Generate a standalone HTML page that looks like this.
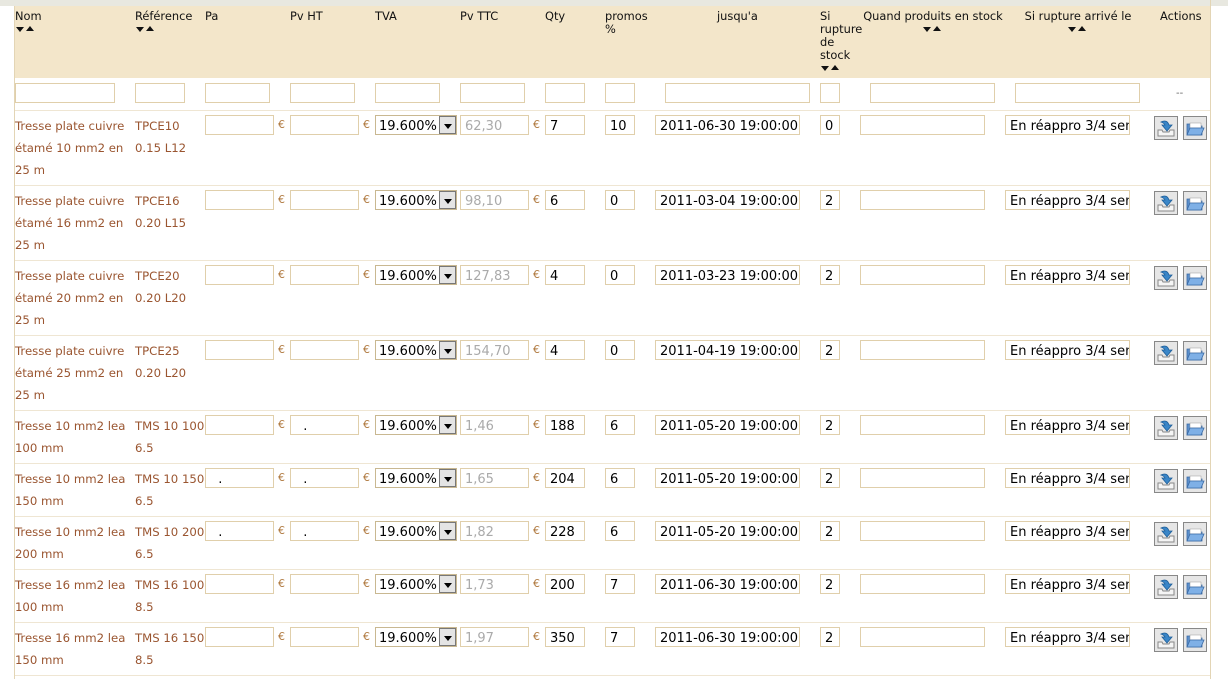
<!DOCTYPE html>
<html><head><meta charset="utf-8"><style>
*{margin:0;padding:0;box-sizing:border-box}
body{width:1228px;height:679px;background:#fff;font-family:"DejaVu Sans","Liberation Sans",sans-serif;font-size:11px;position:relative;overflow:hidden}
.a{position:absolute}
.top{left:0;top:0;width:1228px;height:6px;background:#e8e8e0}
.hd{left:14px;top:6px;width:1197px;height:72px;background:#f3e6ca}
.lb{left:14px;top:6px;width:1px;height:673px;background:#e3d5b5}
.rb{left:1210px;top:0;width:1px;height:679px;background:#e3d5b5}
.h{position:absolute;top:10px;color:#111;line-height:13px;font-size:11.4px;white-space:nowrap}
.s{display:inline-block;height:13px;width:22px;position:relative}
.s:before{content:"";position:absolute;left:1px;top:4px;border-left:4px solid transparent;border-right:4px solid transparent;border-top:5px solid #111}
.s:after{content:"";position:absolute;left:11px;top:3px;border-left:4px solid transparent;border-right:4px solid transparent;border-bottom:5px solid #111}
.in{position:absolute;height:20px;border:1px solid #e0cfab;background:#fff;font-size:13px;line-height:19px;padding-top:1px;padding-left:4px;color:#000;white-space:nowrap;overflow:hidden}
.g{color:#aaa}
.sep{position:absolute;left:15px;width:1195px;height:1px;background:#efe6d3}
.tx{position:absolute;color:#9a5530;line-height:22px;font-size:11.7px;white-space:nowrap}
.eu{position:absolute;color:#b07a40;font-size:11px;line-height:20px}
.sel{position:absolute;width:82px;height:20px;border:1px solid #c9b891;background:#fff;font-size:13px;line-height:19px;padding-left:3px;padding-top:1px}
.sel i{position:absolute;right:0;top:0;width:17px;height:18px;background:#e4e4e4;border:1px solid #777}
.sel i:after{content:"";position:absolute;left:4px;top:7px;border-left:4px solid transparent;border-right:4px solid transparent;border-top:5px solid #000}
.ic{position:absolute;width:24px;height:24px}
</style></head><body>
<div class="a top"></div>
<div class="a hd"></div>
<div class="a lb"></div>
<div class="a rb"></div>

<div class="h" style="left:15px">Nom<br><span class="s"></span></div>
<div class="h" style="left:135px">Référence<br><span class="s"></span></div>
<div class="h" style="left:205px">Pa</div>
<div class="h" style="left:290px">Pv HT</div>
<div class="h" style="left:375px">TVA</div>
<div class="h" style="left:460px">Pv TTC</div>
<div class="h" style="left:545px">Qty</div>
<div class="h" style="left:605px">promos<br>%</div>
<div class="h" style="left:717px">jusqu'a</div>
<div class="h" style="left:820px">Si<br>rupture<br>de<br>stock<br><span class="s"></span></div>
<div class="h" style="left:863px;text-align:center;width:140px">Quand produits en stock<br><span class="s"></span></div>
<div class="h" style="left:1020px;text-align:center;width:116px">Si rupture arrivé le<br><span class="s"></span></div>
<div class="h" style="left:1160px">Actions</div>

<!-- filter row -->
<div class="in" style="left:15px;top:83px;width:100px"></div>
<div class="in" style="left:135px;top:83px;width:50px"></div>
<div class="in" style="left:205px;top:83px;width:65px"></div>
<div class="in" style="left:290px;top:83px;width:65px"></div>
<div class="in" style="left:375px;top:83px;width:65px"></div>
<div class="in" style="left:460px;top:83px;width:65px"></div>
<div class="in" style="left:545px;top:83px;width:40px"></div>
<div class="in" style="left:605px;top:83px;width:30px"></div>
<div class="in" style="left:665px;top:83px;width:145px"></div>
<div class="in" style="left:820px;top:83px;width:20px"></div>
<div class="in" style="left:870px;top:83px;width:125px"></div>
<div class="in" style="left:1015px;top:83px;width:125px"></div>
<div class="a" style="left:1176px;top:88px;color:#666;font-size:10px">--</div>

<svg width="0" height="0" style="position:absolute"><defs>
<g id="i1"><rect x="0.5" y="0.5" width="23" height="23" fill="#e6e6e6" stroke="#888"/><path d="M4 14 L4 20 L20 20 L20 14 L16 14 L15 16 L9 16 L8 14 Z" fill="#f5f5f5" stroke="#888"/><path d="M7 6 Q13 3 15 9 L18 9 L13 15 L8 9 L11 9 Q10 7 7 6 Z" fill="#3a86c8" stroke="#1f5f99" stroke-width="0.8"/></g>
<g id="i2"><rect x="0.5" y="0.5" width="23" height="23" fill="#e6e6e6" stroke="#888"/><path d="M4 8 L9 8 L10 10 L19 10 L19 19 L4 19 Z" fill="#5b8fcc" stroke="#3a6aa5" stroke-width="0.8"/><rect x="7" y="7" width="11" height="5" fill="#fff" stroke="#999" stroke-width="0.5"/><path d="M4 19 L7 12 L21 12 L18 19 Z" fill="#7fb0e6" stroke="#3a6aa5" stroke-width="0.8"/></g>
</defs></svg>

<!-- rows -->
<div class="sep" style="top:110px"></div>
<div class="tx" style="left:15px;top:115px">Tresse plate cuivre<br>étamé 10 mm2 en<br>25 m</div>
<div class="tx" style="left:135px;top:115px">TPCE10<br>0.15 L12</div>
<div class="in" style="left:205px;top:115px;width:69px"></div><div class="eu" style="left:278px;top:115px">€</div>
<div class="in" style="left:290px;top:115px;width:69px"></div><div class="eu" style="left:363px;top:115px">€</div>
<div class="sel" style="left:375px;top:115px">19.600%<i></i></div>
<div class="in g" style="left:460px;top:115px;width:69px">62,30</div><div class="eu" style="left:533px;top:115px">€</div>
<div class="in" style="left:545px;top:115px;width:40px">7</div>
<div class="in" style="left:605px;top:115px;width:30px">10</div>
<div class="in" style="left:655px;top:115px;width:145px">2011-06-30 19:00:00</div>
<div class="in" style="left:820px;top:115px;width:20px">0</div>
<div class="in" style="left:860px;top:115px;width:125px"></div>
<div class="in" style="left:1005px;top:115px;width:125px">En réappro 3/4 semaines</div>
<svg class="ic" style="left:1154px;top:116px"><use href="#i1"/></svg><svg class="ic" style="left:1183px;top:116px"><use href="#i2"/></svg>

<div class="sep" style="top:185px"></div>
<div class="tx" style="left:15px;top:190px">Tresse plate cuivre<br>étamé 16 mm2 en<br>25 m</div>
<div class="tx" style="left:135px;top:190px">TPCE16<br>0.20 L15</div>
<div class="in" style="left:205px;top:190px;width:69px"></div><div class="eu" style="left:278px;top:190px">€</div>
<div class="in" style="left:290px;top:190px;width:69px"></div><div class="eu" style="left:363px;top:190px">€</div>
<div class="sel" style="left:375px;top:190px">19.600%<i></i></div>
<div class="in g" style="left:460px;top:190px;width:69px">98,10</div><div class="eu" style="left:533px;top:190px">€</div>
<div class="in" style="left:545px;top:190px;width:40px">6</div>
<div class="in" style="left:605px;top:190px;width:30px">0</div>
<div class="in" style="left:655px;top:190px;width:145px">2011-03-04 19:00:00</div>
<div class="in" style="left:820px;top:190px;width:20px">2</div>
<div class="in" style="left:860px;top:190px;width:125px"></div>
<div class="in" style="left:1005px;top:190px;width:125px">En réappro 3/4 semaines</div>
<svg class="ic" style="left:1154px;top:191px"><use href="#i1"/></svg><svg class="ic" style="left:1183px;top:191px"><use href="#i2"/></svg>

<div class="sep" style="top:260px"></div>
<div class="tx" style="left:15px;top:265px">Tresse plate cuivre<br>étamé 20 mm2 en<br>25 m</div>
<div class="tx" style="left:135px;top:265px">TPCE20<br>0.20 L20</div>
<div class="in" style="left:205px;top:265px;width:69px"></div><div class="eu" style="left:278px;top:265px">€</div>
<div class="in" style="left:290px;top:265px;width:69px"></div><div class="eu" style="left:363px;top:265px">€</div>
<div class="sel" style="left:375px;top:265px">19.600%<i></i></div>
<div class="in g" style="left:460px;top:265px;width:69px">127,83</div><div class="eu" style="left:533px;top:265px">€</div>
<div class="in" style="left:545px;top:265px;width:40px">4</div>
<div class="in" style="left:605px;top:265px;width:30px">0</div>
<div class="in" style="left:655px;top:265px;width:145px">2011-03-23 19:00:00</div>
<div class="in" style="left:820px;top:265px;width:20px">2</div>
<div class="in" style="left:860px;top:265px;width:125px"></div>
<div class="in" style="left:1005px;top:265px;width:125px">En réappro 3/4 semaines</div>
<svg class="ic" style="left:1154px;top:266px"><use href="#i1"/></svg><svg class="ic" style="left:1183px;top:266px"><use href="#i2"/></svg>

<div class="sep" style="top:335px"></div>
<div class="tx" style="left:15px;top:340px">Tresse plate cuivre<br>étamé 25 mm2 en<br>25 m</div>
<div class="tx" style="left:135px;top:340px">TPCE25<br>0.20 L20</div>
<div class="in" style="left:205px;top:340px;width:69px"></div><div class="eu" style="left:278px;top:340px">€</div>
<div class="in" style="left:290px;top:340px;width:69px"></div><div class="eu" style="left:363px;top:340px">€</div>
<div class="sel" style="left:375px;top:340px">19.600%<i></i></div>
<div class="in g" style="left:460px;top:340px;width:69px">154,70</div><div class="eu" style="left:533px;top:340px">€</div>
<div class="in" style="left:545px;top:340px;width:40px">4</div>
<div class="in" style="left:605px;top:340px;width:30px">0</div>
<div class="in" style="left:655px;top:340px;width:145px">2011-04-19 19:00:00</div>
<div class="in" style="left:820px;top:340px;width:20px">2</div>
<div class="in" style="left:860px;top:340px;width:125px"></div>
<div class="in" style="left:1005px;top:340px;width:125px">En réappro 3/4 semaines</div>
<svg class="ic" style="left:1154px;top:341px"><use href="#i1"/></svg><svg class="ic" style="left:1183px;top:341px"><use href="#i2"/></svg>

<div class="sep" style="top:410px"></div>
<div class="tx" style="left:15px;top:415px">Tresse 10 mm2 lea<br>100 mm</div>
<div class="tx" style="left:135px;top:415px">TMS 10 100<br>6.5</div>
<div class="in" style="left:205px;top:415px;width:69px"></div><div class="eu" style="left:278px;top:415px">€</div>
<div class="in" style="left:290px;top:415px;width:69px">&nbsp;&nbsp;.</div><div class="eu" style="left:363px;top:415px">€</div>
<div class="sel" style="left:375px;top:415px">19.600%<i></i></div>
<div class="in g" style="left:460px;top:415px;width:69px">1,46</div><div class="eu" style="left:533px;top:415px">€</div>
<div class="in" style="left:545px;top:415px;width:40px">188</div>
<div class="in" style="left:605px;top:415px;width:30px">6</div>
<div class="in" style="left:655px;top:415px;width:145px">2011-05-20 19:00:00</div>
<div class="in" style="left:820px;top:415px;width:20px">2</div>
<div class="in" style="left:860px;top:415px;width:125px"></div>
<div class="in" style="left:1005px;top:415px;width:125px">En réappro 3/4 semaines</div>
<svg class="ic" style="left:1154px;top:416px"><use href="#i1"/></svg><svg class="ic" style="left:1183px;top:416px"><use href="#i2"/></svg>

<div class="sep" style="top:463px"></div>
<div class="tx" style="left:15px;top:468px">Tresse 10 mm2 lea<br>150 mm</div>
<div class="tx" style="left:135px;top:468px">TMS 10 150<br>6.5</div>
<div class="in" style="left:205px;top:468px;width:69px">&nbsp;&nbsp;.</div><div class="eu" style="left:278px;top:468px">€</div>
<div class="in" style="left:290px;top:468px;width:69px">&nbsp;&nbsp;.</div><div class="eu" style="left:363px;top:468px">€</div>
<div class="sel" style="left:375px;top:468px">19.600%<i></i></div>
<div class="in g" style="left:460px;top:468px;width:69px">1,65</div><div class="eu" style="left:533px;top:468px">€</div>
<div class="in" style="left:545px;top:468px;width:40px">204</div>
<div class="in" style="left:605px;top:468px;width:30px">6</div>
<div class="in" style="left:655px;top:468px;width:145px">2011-05-20 19:00:00</div>
<div class="in" style="left:820px;top:468px;width:20px">2</div>
<div class="in" style="left:860px;top:468px;width:125px"></div>
<div class="in" style="left:1005px;top:468px;width:125px">En réappro 3/4 semaines</div>
<svg class="ic" style="left:1154px;top:469px"><use href="#i1"/></svg><svg class="ic" style="left:1183px;top:469px"><use href="#i2"/></svg>

<div class="sep" style="top:516px"></div>
<div class="tx" style="left:15px;top:521px">Tresse 10 mm2 lea<br>200 mm</div>
<div class="tx" style="left:135px;top:521px">TMS 10 200<br>6.5</div>
<div class="in" style="left:205px;top:521px;width:69px">&nbsp;&nbsp;.</div><div class="eu" style="left:278px;top:521px">€</div>
<div class="in" style="left:290px;top:521px;width:69px">&nbsp;&nbsp;.</div><div class="eu" style="left:363px;top:521px">€</div>
<div class="sel" style="left:375px;top:521px">19.600%<i></i></div>
<div class="in g" style="left:460px;top:521px;width:69px">1,82</div><div class="eu" style="left:533px;top:521px">€</div>
<div class="in" style="left:545px;top:521px;width:40px">228</div>
<div class="in" style="left:605px;top:521px;width:30px">6</div>
<div class="in" style="left:655px;top:521px;width:145px">2011-05-20 19:00:00</div>
<div class="in" style="left:820px;top:521px;width:20px">2</div>
<div class="in" style="left:860px;top:521px;width:125px"></div>
<div class="in" style="left:1005px;top:521px;width:125px">En réappro 3/4 semaines</div>
<svg class="ic" style="left:1154px;top:522px"><use href="#i1"/></svg><svg class="ic" style="left:1183px;top:522px"><use href="#i2"/></svg>

<div class="sep" style="top:569px"></div>
<div class="tx" style="left:15px;top:574px">Tresse 16 mm2 lea<br>100 mm</div>
<div class="tx" style="left:135px;top:574px">TMS 16 100<br>8.5</div>
<div class="in" style="left:205px;top:574px;width:69px"></div><div class="eu" style="left:278px;top:574px">€</div>
<div class="in" style="left:290px;top:574px;width:69px"></div><div class="eu" style="left:363px;top:574px">€</div>
<div class="sel" style="left:375px;top:574px">19.600%<i></i></div>
<div class="in g" style="left:460px;top:574px;width:69px">1,73</div><div class="eu" style="left:533px;top:574px">€</div>
<div class="in" style="left:545px;top:574px;width:40px">200</div>
<div class="in" style="left:605px;top:574px;width:30px">7</div>
<div class="in" style="left:655px;top:574px;width:145px">2011-06-30 19:00:00</div>
<div class="in" style="left:820px;top:574px;width:20px">2</div>
<div class="in" style="left:860px;top:574px;width:125px"></div>
<div class="in" style="left:1005px;top:574px;width:125px">En réappro 3/4 semaines</div>
<svg class="ic" style="left:1154px;top:575px"><use href="#i1"/></svg><svg class="ic" style="left:1183px;top:575px"><use href="#i2"/></svg>

<div class="sep" style="top:622px"></div>
<div class="tx" style="left:15px;top:627px">Tresse 16 mm2 lea<br>150 mm</div>
<div class="tx" style="left:135px;top:627px">TMS 16 150<br>8.5</div>
<div class="in" style="left:205px;top:627px;width:69px"></div><div class="eu" style="left:278px;top:627px">€</div>
<div class="in" style="left:290px;top:627px;width:69px"></div><div class="eu" style="left:363px;top:627px">€</div>
<div class="sel" style="left:375px;top:627px">19.600%<i></i></div>
<div class="in g" style="left:460px;top:627px;width:69px">1,97</div><div class="eu" style="left:533px;top:627px">€</div>
<div class="in" style="left:545px;top:627px;width:40px">350</div>
<div class="in" style="left:605px;top:627px;width:30px">7</div>
<div class="in" style="left:655px;top:627px;width:145px">2011-06-30 19:00:00</div>
<div class="in" style="left:820px;top:627px;width:20px">2</div>
<div class="in" style="left:860px;top:627px;width:125px"></div>
<div class="in" style="left:1005px;top:627px;width:125px">En réappro 3/4 semaines</div>
<svg class="ic" style="left:1154px;top:628px"><use href="#i1"/></svg><svg class="ic" style="left:1183px;top:628px"><use href="#i2"/></svg>

<div class="sep" style="top:675px"></div>
</body></html>
